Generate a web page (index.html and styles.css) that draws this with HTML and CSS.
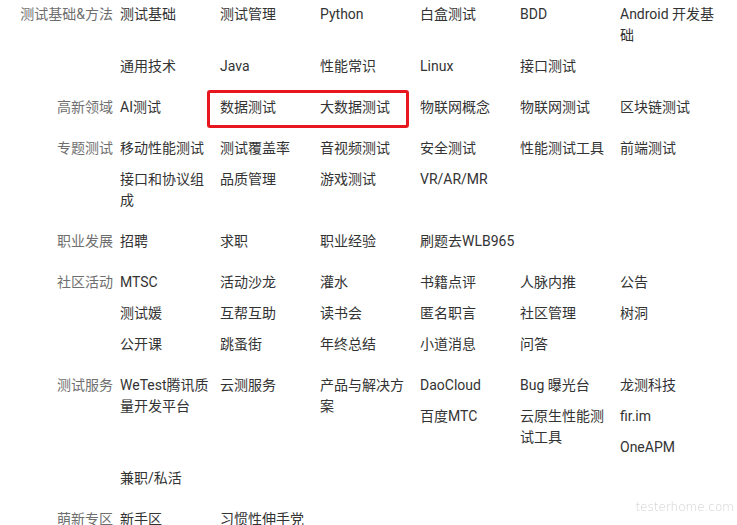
FILE: index.html
```html
<!DOCTYPE html>
<html lang="zh-CN">
<head>
    <meta charset="UTF-8">
    <meta name="viewport" content="width=device-width, initial-scale=1.0">
    <title>节点列表</title>
    <link rel="stylesheet" href="styles.css">
</head>
<body>
    <div class="nodes">
        <dl class="node-group">
            <dt>测试基础&amp;方法</dt>
            <dd>
                <a href="#">测试基础</a>
                <a href="#">测试管理</a>
                <a href="#">Python</a>
                <a href="#">白盒测试</a>
                <a href="#">BDD</a>
                <a href="#">Android 开发基础</a>
                <a href="#">通用技术</a>
                <a href="#">Java</a>
                <a href="#">性能常识</a>
                <a href="#">Linux</a>
                <a href="#">接口测试</a>
            </dd>
        </dl>

        <dl class="node-group">
            <dt>高新领域</dt>
            <dd>
                <a href="#">AI测试</a>
                <a href="#">数据测试</a>
                <a href="#">大数据测试</a>
                <a href="#">物联网概念</a>
                <a href="#">物联网测试</a>
                <a href="#">区块链测试</a>
                <!-- highlight drawn over the two data items -->
                <span class="mark"></span>
            </dd>
        </dl>

        <dl class="node-group">
            <dt>专题测试</dt>
            <dd>
                <a href="#">移动性能测试</a>
                <a href="#">测试覆盖率</a>
                <a href="#">音视频测试</a>
                <a href="#">安全测试</a>
                <a href="#">性能测试工具</a>
                <a href="#">前端测试</a>
                <a href="#">接口和协议组成</a>
                <a href="#">品质管理</a>
                <a href="#">游戏测试</a>
                <a href="#">VR/AR/MR</a>
            </dd>
        </dl>

        <dl class="node-group">
            <dt>职业发展</dt>
            <dd>
                <a href="#">招聘</a>
                <a href="#">求职</a>
                <a href="#">职业经验</a>
                <a href="#">刷题去WLB965</a>
            </dd>
        </dl>

        <dl class="node-group">
            <dt>社区活动</dt>
            <dd>
                <a href="#">MTSC</a>
                <a href="#">活动沙龙</a>
                <a href="#">灌水</a>
                <a href="#">书籍点评</a>
                <a href="#">人脉内推</a>
                <a href="#">公告</a>
                <a href="#">测试媛</a>
                <a href="#">互帮互助</a>
                <a href="#">读书会</a>
                <a href="#">匿名职言</a>
                <a href="#">社区管理</a>
                <a href="#">树洞</a>
                <a href="#">公开课</a>
                <a href="#">跳蚤街</a>
                <a href="#">年终总结</a>
                <a href="#">小道消息</a>
                <a href="#">问答</a>
            </dd>
        </dl>

        <dl class="node-group">
            <dt>测试服务</dt>
            <dd>
                <a href="#">WeTest腾讯质量开发平台</a>
                <a href="#">云测服务</a>
                <a href="#">产品与解决方案</a>
                <a href="#">DaoCloud</a>
                <a href="#">Bug 曝光台</a>
                <a href="#">龙测科技</a>
                <a href="#">百度MTC</a>
                <a href="#">云原生性能测试工具</a>
                <a href="#">fir.im</a>
                <a href="#">OneAPM</a>
                <a href="#">兼职/私活</a>
            </dd>
        </dl>

        <dl class="node-group">
            <dt>萌新专区</dt>
            <dd>
                <a href="#">新手区</a>
                <a href="#">习惯性伸手党</a>
            </dd>
        </dl>
    </div>

    <div class="watermark">testerhome.com</div>
</body>
</html>
```

FILE: styles.css
```css
html, body {
    overflow: hidden;
}

body {
    margin: 0;
    font-family: Roboto, "Noto Sans CJK SC", sans-serif;
    font-size: 14px;
    line-height: 21px;
    color: #333;
    background: #fff;
}

.nodes {
    padding-top: 4px;
}

.node-group {
    display: flex;
    margin: 0 0 10px;
}

.node-group dt {
    width: 113px;
    margin-right: 7px;
    flex-shrink: 0;
    text-align: right;
    color: #6f6f6f;
}

.node-group dd {
    position: relative;
    display: flow-root;
    width: 600px;
    margin: 0;
}

.node-group dd a {
    float: left;
    width: 100px;
    padding-right: 2.5px;
    margin-bottom: 10px;
    box-sizing: border-box;
    color: #333;
    text-decoration: none;
}

.mark {
    position: absolute;
    left: 87px;
    top: -7px;
    width: 202px;
    height: 38px;
    border: 3px solid #e8161f;
    border-radius: 3px;
    box-sizing: border-box;
}

.watermark {
    position: fixed;
    right: 3px;
    bottom: 11px;
    font-family: "DejaVu Sans", sans-serif;
    font-weight: 200;
    font-size: 12px;
    line-height: 14px;
    color: #d0d0d0;
}
```
